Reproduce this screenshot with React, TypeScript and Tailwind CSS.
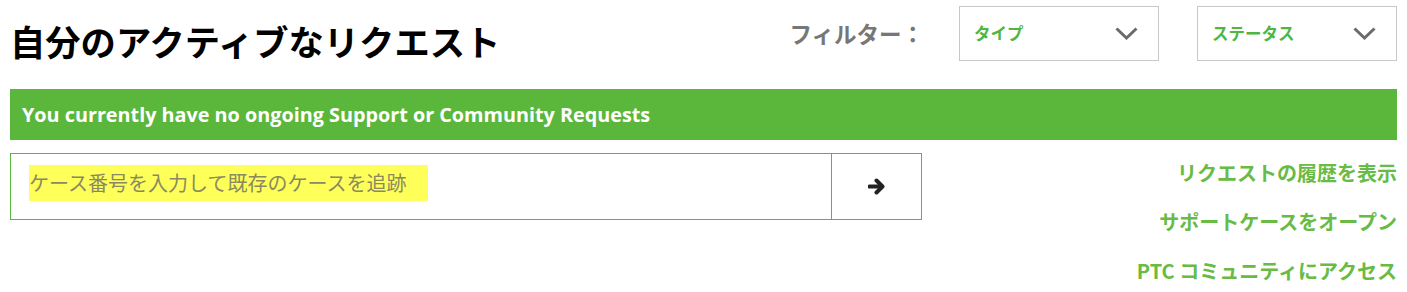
const jp = "font-['Noto_Sans_CJK_JP','Noto_Sans',sans-serif]";

const Chevron = () => (
    <svg width="23" height="13" viewBox="0 0 23 13" className="shrink-0">
        <polyline points="1.5,1.5 11.5,11 21.5,1.5" fill="none" stroke="#6b6b6b" strokeWidth="3" />
    </svg>
);

const Arrow = () => (
    <svg width="18" height="17" viewBox="0 0 18 17">
        <path d="M1.5 8.5 H13" stroke="#222222" strokeWidth="4" strokeLinecap="round" />
        <polyline points="8.5,2.5 14.5,8.5 8.5,14.5" fill="none" stroke="#222222" strokeWidth="4" strokeLinecap="round" strokeLinejoin="round" />
    </svg>
);

const FilterSelect = ({ label }: { label: string }) => (
    <div className="w-[200px] h-[55px] border border-[#c8c8c8] bg-white flex items-center justify-between pl-[14px] pr-[20px]">
        <span className={`${jp} text-[16.5px] font-bold text-[#4fb63f]`}>{label}</span>
        <Chevron />
    </div>
);

const App = () => {
    return (
        <div className="w-[1407px] h-[292px] bg-white px-[10px] overflow-hidden">
            <div className="flex items-start justify-between">
                <h1 className={`${jp} mt-[24px] text-[35.3px] leading-[34px] font-bold text-black`}>
                    自分のアクティブなリクエスト
                </h1>

                <div className="mt-[6px] flex items-center">
                    <span className={`${jp} text-[22.5px] font-bold text-[#777777] mr-[35px]`}>
                        フィルター：
                    </span>
                    <div className="flex items-center gap-[38px]">
                        <FilterSelect label="タイプ" />
                        <FilterSelect label="ステータス" />
                    </div>
                </div>
            </div>

            <div className="mt-[28px] h-[51px] bg-[#5bb73b] flex items-center pl-[12px]">
                <p className="font-['Open_Sans',sans-serif] font-bold text-[19.8px] text-white">
                    You currently have no ongoing Support or Community Requests
                </p>
            </div>

            <div className="mt-[13px] flex items-start justify-between">
                <div className="w-[912px] h-[67px] border border-[#5bb73b] flex">
                    <div className="flex-1 flex items-center pl-[18px] pb-[7px]">
                        <span className={`${jp} bg-[#ffff5a] h-[36px] pr-[22px] flex items-center text-[20px] text-[#8a8a5e]`}>
                            ケース番号を入力して既存のケースを追跡
                        </span>
                    </div>
                    <div className="w-[90px] border-l border-[#5bb73b] flex items-center justify-center">
                        <Arrow />
                    </div>
                </div>

                <div className={`${jp} pt-[5px] flex flex-col items-end gap-[19px] text-[20px] leading-[30px] font-bold text-[#68bb45]`}>
                    <a href="#">リクエストの履歴を表示</a>
                    <a href="#">サポートケースをオープン</a>
                    <a href="#">PTC コミュニティにアクセス</a>
                </div>
            </div>
        </div>
    );
};

export default App;
